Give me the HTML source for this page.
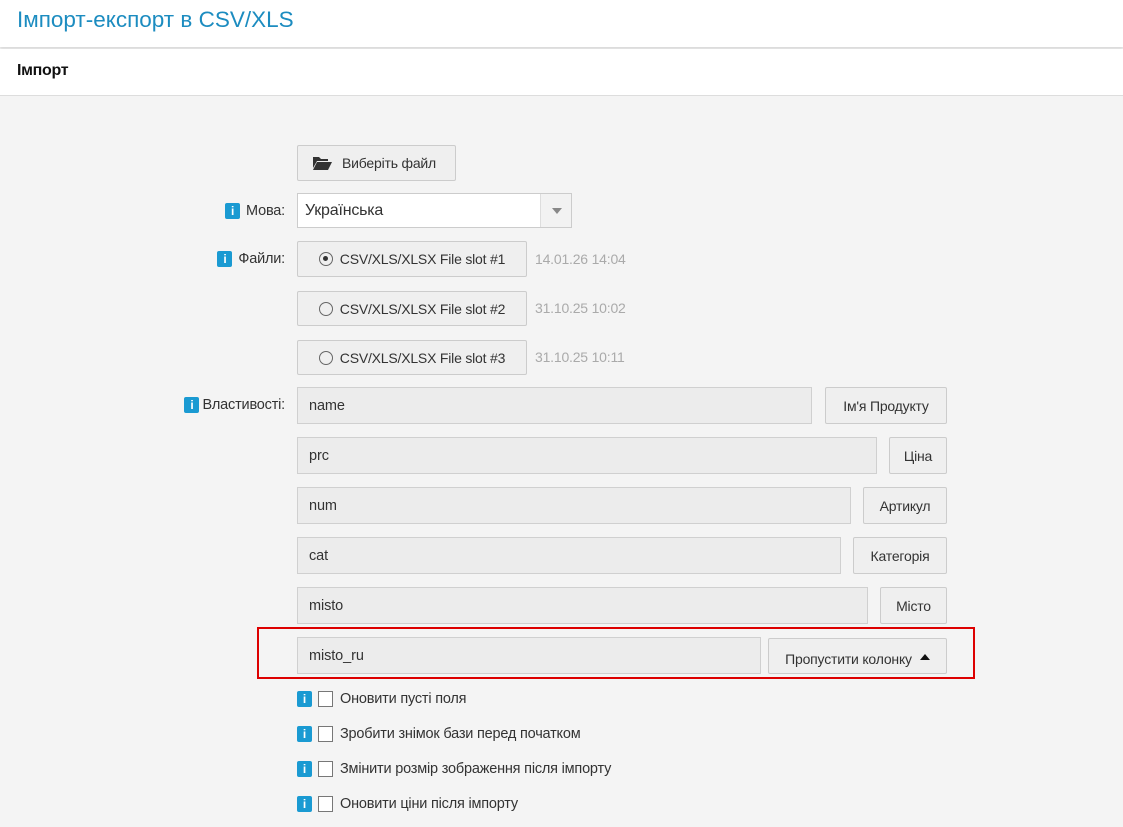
<!DOCTYPE html>
<html><head><meta charset="utf-8"><style>
*{box-sizing:border-box;margin:0;padding:0}
body{width:1123px;height:827px;overflow:hidden;background:#f4f4f4;font-family:"Liberation Sans",sans-serif;color:#333;position:relative;font-size:14px}
.a{position:absolute}
#hd{left:0;top:0;width:1123px;height:47px;background:#fff;box-shadow:0 2px 3px rgba(0,0,0,.12)}
#hd span{position:absolute;left:17px;top:7px;font-size:22.5px;color:#1c8cc0;letter-spacing:0}
#sub{left:0;top:49px;width:1123px;height:47px;background:#fff;border-bottom:1px solid #ddd}
#sub span{position:absolute;left:17px;top:13px;font-size:16px;font-weight:bold;color:#111;letter-spacing:-.3px}
.btn{position:absolute;background:#efefef;border:1px solid #ccc;border-radius:2px;font-size:14px;color:#333;display:flex;align-items:center;justify-content:center;letter-spacing:-.2px;white-space:nowrap}
.inp{position:absolute;background:#ececec;border:1px solid #d0d0d0;height:37px;padding-left:11px;line-height:37px;font-size:14.5px;color:#333;letter-spacing:-.1px}
.lbl{position:absolute;right:838px;font-size:14.5px;color:#333;display:flex;align-items:center;gap:6px;letter-spacing:-.2px;white-space:nowrap}
.ii{display:inline-block;width:15px;height:16px;background:#1a9ad2;border-radius:2px;color:#fff;font-weight:bold;font-size:12px;text-align:center;line-height:16px}
.dt{position:absolute;left:535px;color:#aaa;font-size:14px;letter-spacing:-.2px}
.rd{display:inline-block;width:14px;height:14px;border:1.5px solid #666;border-radius:50%;margin-right:7px;position:relative}
.rd.on::after{content:"";position:absolute;left:3px;top:3px;width:5px;height:5px;border-radius:50%;background:#333}
.cb{position:absolute;left:297px;display:flex;align-items:center;font-size:14.5px;letter-spacing:-.2px;white-space:nowrap}
.cb i{display:inline-block;width:15px;height:16px;border:1px solid #777;background:#fff;margin:0 7px 0 6px}
</style></head><body>
<div id="hd" class="a"><span>Імпорт-експорт в CSV/XLS</span></div>
<div id="sub" class="a"><span>Імпорт</span></div>

<div class="btn" style="left:297px;top:145px;width:159px;height:36px;justify-content:flex-start;padding-left:15px">
<svg width="19" height="14" viewBox="0 0 19 14" style="margin-right:10px"><path d="M0 1h6l2 2h7v2H4L0 12z" fill="#333"/><path d="M4 6h15l-4 8H0z" fill="#333"/></svg>Виберіть файл</div>

<div class="lbl" style="top:203px"><span class="ii">i</span>Мова:</div>
<div class="a" style="left:297px;top:193px;width:275px;height:35px;background:#fff;border:1px solid #ccc;font-size:16px;padding:8px 0 0 7px;letter-spacing:-.2px">Українська
<div class="a" style="right:0;top:0;width:31px;height:33px;background:#f2f2f2;border-left:1px solid #ddd"><div class="a" style="left:11px;top:14px;border:5px solid transparent;border-top:6px solid #888;border-bottom:0"></div></div></div>

<div class="lbl" style="top:251px"><span class="ii">i</span>Файли:</div>
<div class="btn" style="left:297px;top:241px;width:230px;height:36px"><span class="rd on"></span>CSV/XLS/XLSX File slot #1</div>
<div class="dt" style="top:251px">14.01.26 14:04</div>
<div class="btn" style="left:297px;top:291px;width:230px;height:35px"><span class="rd"></span>CSV/XLS/XLSX File slot #2</div>
<div class="dt" style="top:300px">31.10.25 10:02</div>
<div class="btn" style="left:297px;top:340px;width:230px;height:35px"><span class="rd"></span>CSV/XLS/XLSX File slot #3</div>
<div class="dt" style="top:349px">31.10.25 10:11</div>

<div class="lbl" style="top:397px;right:838px"><span class="ii" style="margin-right:-3px">i</span>Властивості:</div>
<div class="inp" style="left:297px;top:387px;width:515px">name</div>
<div class="btn" style="left:825px;top:387px;width:122px;height:37px">Ім'я Продукту</div>
<div class="inp" style="left:297px;top:437px;width:580px">prc</div>
<div class="btn" style="left:889px;top:437px;width:58px;height:37px">Ціна</div>
<div class="inp" style="left:297px;top:487px;width:554px">num</div>
<div class="btn" style="left:863px;top:487px;width:84px;height:37px">Артикул</div>
<div class="inp" style="left:297px;top:537px;width:544px">cat</div>
<div class="btn" style="left:853px;top:537px;width:94px;height:37px">Категорія</div>
<div class="inp" style="left:297px;top:587px;width:571px">misto</div>
<div class="btn" style="left:880px;top:587px;width:67px;height:37px">Місто</div>

<div class="a" style="left:257px;top:627px;width:718px;height:52px;border:2px solid #d00"></div>
<div class="inp" style="left:297px;top:637px;width:464px">misto_ru</div>
<div class="btn" style="left:768px;top:638px;width:179px;height:36px;padding-top:6px">Пропустити колонку<span style="display:inline-block;margin-left:8px;border:5px solid transparent;border-bottom:6px solid #111;border-top:0;margin-top:-4px"></span></div>

<div class="cb" style="top:691px"><span class="ii">i</span><i></i>Оновити пусті поля</div>
<div class="cb" style="top:726px"><span class="ii">i</span><i></i>Зробити знімок бази перед початком</div>
<div class="cb" style="top:761px"><span class="ii">i</span><i></i>Змінити розмір зображення після імпорту</div>
<div class="cb" style="top:796px"><span class="ii">i</span><i></i>Оновити ціни після імпорту</div>
</body></html>
